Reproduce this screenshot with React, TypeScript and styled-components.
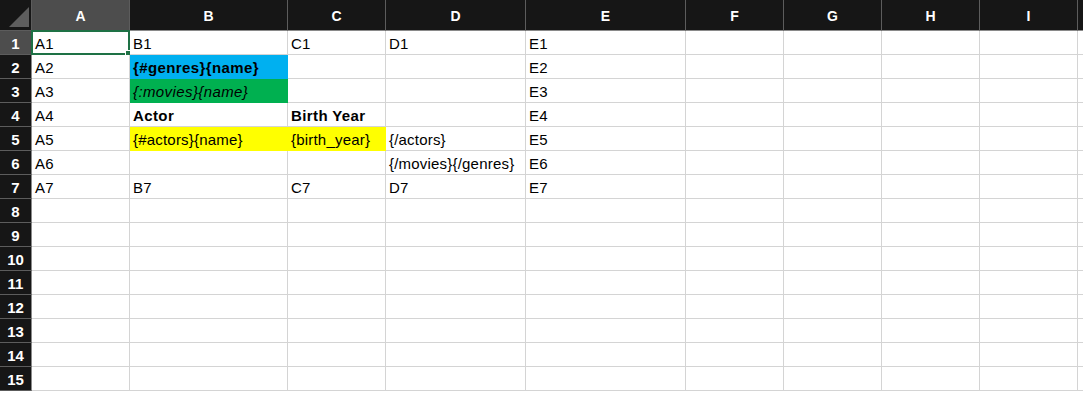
import React from "react";
import styled, { createGlobalStyle } from "styled-components";

const Global = createGlobalStyle`
  html, body { margin: 0; padding: 0; background: #ffffff; }
  body { font-family: "Liberation Sans", Arial, sans-serif; overflow: hidden; }
`;

const COLS = ["A", "B", "C", "D", "E", "F", "G", "H", "I", ""];
const WIDTHS = [98, 158, 98, 140, 160, 98, 98, 98, 98, 98];
const ROWS = 15;

type Fill = "blue" | "green" | "yellow" | undefined;
const FILLS: Record<string, string> = {
  blue: "#00b0f0",
  green: "#00b050",
  yellow: "#ffff00",
};

type CellData = { text?: string; fill?: Fill; bold?: boolean; italic?: boolean };

const data: Record<string, CellData> = {
  A1: { text: "A1" }, B1: { text: "B1" }, C1: { text: "C1" }, D1: { text: "D1" }, E1: { text: "E1" },
  A2: { text: "A2" }, B2: { text: "{#genres}{name}", fill: "blue", bold: true }, E2: { text: "E2" },
  A3: { text: "A3" }, B3: { text: "{:movies}{name}", fill: "green", italic: true }, E3: { text: "E3" },
  A4: { text: "A4" }, B4: { text: "Actor", bold: true }, C4: { text: "Birth Year", bold: true }, E4: { text: "E4" },
  A5: { text: "A5" }, B5: { text: "{#actors}{name}", fill: "yellow" }, C5: { text: "{birth_year}", fill: "yellow" }, D5: { text: "{/actors}" }, E5: { text: "E5" },
  A6: { text: "A6" }, D6: { text: "{/movies}{/genres}" }, E6: { text: "E6" },
  A7: { text: "A7" }, B7: { text: "B7" }, C7: { text: "C7" }, D7: { text: "D7" }, E7: { text: "E7" },
};

const Sheet = styled.div`
  display: grid;
  grid-template-columns: 32px ${WIDTHS.map((w) => `${w}px`).join(" ")};
  grid-template-rows: 31px repeat(${ROWS}, 24px);
  width: 1083px;
  height: 394px;
  overflow: hidden;
  background: #ffffff;
`;

const Corner = styled.div`
  background: #161616;
  border-right: 1px solid #5c5c5c;
  border-bottom: 1px solid #5c5c5c;
  box-sizing: border-box;
  display: flex;
  align-items: flex-end;
  justify-content: flex-end;
  padding: 0 2px 3px 0;
`;

const ColHeader = styled.div<{ $active?: boolean }>`
  background: ${(p) => (p.$active ? "#4d4d4d" : "#161616")};
  color: #ffffff;
  font-family: "Liberation Sans", Arial, sans-serif;
  font-weight: bold;
  font-size: 14px;
  display: flex;
  align-items: center;
  justify-content: center;
  border-right: 1px solid #5c5c5c;
  border-bottom: 1px solid #8a8a8a;
  box-sizing: border-box;
  padding-top: 1px;
`;

const RowHeader = styled.div<{ $active?: boolean }>`
  background: ${(p) => (p.$active ? "#4d4d4d" : "#161616")};
  color: #ffffff;
  font-family: "Liberation Sans", Arial, sans-serif;
  font-weight: bold;
  font-size: 15px;
  display: flex;
  align-items: center;
  justify-content: center;
  border-right: 1px solid #8a8a8a;
  border-bottom: 1px solid #5c5c5c;
  box-sizing: border-box;
  padding-top: 1px;
`;

const Cell = styled.div<{ $fill?: Fill; $bold?: boolean; $italic?: boolean }>`
  position: relative;
  box-sizing: border-box;
  background: ${(p) => (p.$fill ? FILLS[p.$fill] : "#ffffff")};
  border-right: 1px solid ${(p) => (p.$fill ? FILLS[p.$fill] : "#d4d4d4")};
  border-bottom: 1px solid ${(p) => (p.$fill ? FILLS[p.$fill] : "#d4d4d4")};
  color: #000000;
  font-family: "Liberation Sans", Arial, sans-serif;
  font-size: 15px;
  font-weight: ${(p) => (p.$bold ? "bold" : "normal")};
  font-style: ${(p) => (p.$italic ? "italic" : "normal")};
  letter-spacing: ${(p) => (p.$bold || p.$italic ? "0.4px" : "0.2px")};
  white-space: nowrap;
  display: flex;
  align-items: center;
  padding: 2px 0 0 3px;
  overflow: visible;
`;

const Selection = styled.div`
  position: absolute;
  left: -1px;
  top: -1px;
  right: -1px;
  bottom: -1px;
  border: 2px solid #1e7145;
  pointer-events: none;
`;

const Handle = styled.div`
  position: absolute;
  right: -4px;
  bottom: -4px;
  width: 5px;
  height: 5px;
  background: #1e7145;
  border: 1px solid #ffffff;
`;

export default function App() {
  return (
    <>
      <Global />
      <Sheet>
        <Corner>
          <svg width="20" height="20" viewBox="0 0 20 20">
            <polygon points="20,0 20,20 0,20" fill="#5e5e5e" />
          </svg>
        </Corner>
        {COLS.map((c, i) => (
          <ColHeader key={`h${i}`} $active={c === "A"}>
            {c}
          </ColHeader>
        ))}
        {Array.from({ length: ROWS }, (_, i) => i + 1).map((r) => (
          <React.Fragment key={r}>
            <RowHeader $active={r === 1}>{r}</RowHeader>
            {COLS.map((c, ci) => {
              const key = `${c || "J"}${r}`;
              const d = data[key] || {};
              return (
                <Cell key={`${ci}-${r}`} $fill={d.fill} $bold={d.bold} $italic={d.italic}>
                  {d.text}
                  {key === "A1" && (
                    <Selection>
                      <Handle />
                    </Selection>
                  )}
                </Cell>
              );
            })}
          </React.Fragment>
        ))}
      </Sheet>
    </>
  );
}
